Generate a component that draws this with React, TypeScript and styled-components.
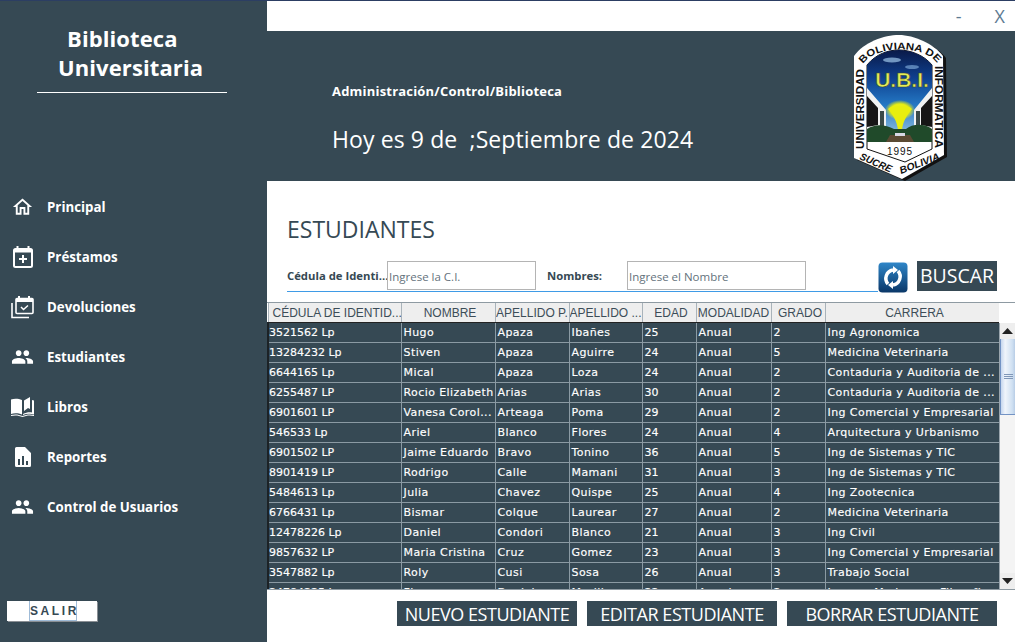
import React from "react";
import styled, { createGlobalStyle } from "styled-components";
import { MdOutlineHome, MdPeople } from "react-icons/md";

const Global = createGlobalStyle`
  html, body { margin: 0; padding: 0; background: #fff; }
  body { width: 1015px; height: 642px; overflow: hidden; font-family: "Open Sans", "Noto Sans", sans-serif; }
  * { box-sizing: border-box; }
`;

const DARK = "#364954";

const Page = styled.div`
  width: 1015px; height: 642px; display: grid; grid-template-columns: 267px 748px;
  border-top: 1px solid #2c3e63; overflow: hidden;
`;
const Sidebar = styled.aside`
  background: ${DARK}; color: #fff; display: flex; flex-direction: column; height: 641px;
`;
const Brand = styled.div`
  margin: 23px 40px 0 37px; width: 190px; height: 69px; border-bottom: 1px solid #fff;
  font-weight: 700; font-size: 22px; line-height: 29px; letter-spacing: .1px;
`;
const BrandLine = styled.div<{ $pad: number }>`
  padding-left: ${p => p.$pad}px; white-space: nowrap;
`;
const Nav = styled.nav`
  display: flex; flex-direction: column; margin-top: 89px;
`;
const NavItem = styled.div`
  height: 50px; display: flex; align-items: center; padding-left: 11px; gap: 13px;
  font-weight: 700; font-size: 13.3px; color: #fff;
`;
const IconBox = styled.span`
  width: 23px; height: 24px; display: flex; align-items: center; justify-content: center; flex: none;
`;
const Exit = styled.div`
  margin: 69px 0 0 7px; width: 90px; height: 20px; background: #fff; display: flex; justify-content: center;
  box-shadow: 1px 1px 0 #8a8f94;
`;
const ExitLabel = styled.span`
  width: 48px; height: 20px; margin-left: 2px; border: 1px solid #9fbbd8; border-top: 0;
  font: 700 12px "Liberation Sans", sans-serif; letter-spacing: 2.6px; color: #364954; line-height: 20px; text-align: center;
`;
const Main = styled.main`
  display: flex; flex-direction: column; height: 641px; background: #fff;
`;
const TitleBar = styled.div`
  height: 30px; display: flex; justify-content: flex-end; align-items: center; color: #5d7a92;
  font: 400 18px "Open Sans", sans-serif; padding-right: 10px; gap: 33px;
`;
const Banner = styled.header`
  height: 150px; background: ${DARK}; color: #fff; display: flex; justify-content: space-between;
  padding: 0 67px 0 65px; flex: none;
`;
const BannerText = styled.div`
  display: flex; flex-direction: column; padding-top: 51px;
`;
const PathLine = styled.div`font-weight: 700; font-size: 13px; line-height: 18px; letter-spacing: .2px;`;
const Today = styled.div`font-size: 23px; line-height: 30px; margin-top: 24px; letter-spacing: .1px;`;
const LogoBox = styled.div`margin-top: 2px; flex: none;`;
const Content = styled.section`
  flex: 1; display: flex; flex-direction: column; min-height: 0;
`;
const SectionTitle = styled.h1`
  margin: 34px 0 0 20px; font-size: 23px; font-weight: 400; color: #364954; line-height: 28px;
`;
const SearchBar = styled.div`
  display: flex; align-items: flex-start; margin: 18px 18px 0 20px; height: 33px; position: relative;
`;
const SearchLine = styled.div`
  position: absolute; left: 0; top: 30px; width: 591px; height: 1px; background: #3f9be6;
`;
const FieldLabel = styled.label<{ $w: number }>`
  font-weight: 700; font-size: 11.3px; color: #364954; line-height: 30px; width: ${p => p.$w}px; flex: none;
  white-space: nowrap; overflow: hidden;
`;
const Field = styled.div<{ $w: number; $mr: number }>`
  width: ${p => p.$w}px; height: 29px; border: 1px solid #b4b4b4; background: #fff; flex: none;
  font-size: 11.5px; color: #64727c; line-height: 29px; padding-left: 1px; margin-right: ${p => p.$mr}px;
`;
const RefreshBtn = styled.div`
  width: 30px; height: 32px; margin: 1px 9px 0 0; flex: none;
`;
const SearchBtn = styled.div`
  width: 80px; height: 30px; background: ${DARK}; color: #fff; font-size: 19.5px; line-height: 30px; text-align: center; flex: none;
`;
const TableWrap = styled.div`
  margin-top: 8px; height: 288px; display: grid; grid-template-columns: 732px 16px; border-top: 1px solid #8e9aa2; border-bottom: 1px solid #8e9aa2; overflow: hidden; flex: none;
`;
const TableClip = styled.div`height: 286px; overflow: hidden;`;
const Grid = styled.table`
  border-collapse: collapse; table-layout: fixed; width: 732px;
`;
const Th = styled.th<{ $w: number }>`
  width: ${p => p.$w}px; height: 19px; padding: 1px 0 0 ${p => (p.$w >= 70 && p.$w < 90 ? 0 : 4)}px; background: #eeeeee; border-right: 1px solid #a9b3ba;
  border-left: 1px solid #a9b3ba; border-bottom: 1px solid #222;
  font: 400 12px "Liberation Sans", sans-serif; color: #3c4d58; text-align: center; white-space: nowrap; overflow: hidden;
`;
const Td = styled.td<{ $wide: boolean }>`
  height: 20px; padding: 0 0 0 2px; background: ${DARK}; color: #fff; border: 1px solid #8b9aa3;
  font: 400 11px "DejaVu Sans", sans-serif; white-space: nowrap; overflow: hidden;
  letter-spacing: ${p => (p.$wide ? ".42px" : "0")};
  -webkit-text-stroke: .15px #fff;
  &:first-child { border-left: 2px solid #1c2226; padding-left: 0; }
  &:last-child { border-right: 1px solid #1c2226; }
`;
const ScrollBar = styled.div`
  background: #f4f4f4; display: flex; flex-direction: column; margin-top: 20px; border-left: 1px solid #9aa5ad; height: 266px;
`;
const ScrollBtn = styled.div`
  height: 16px; display: flex; align-items: center; justify-content: center; flex: none; background: #eee;
`;
const Thumb = styled.div`
  height: 76px; background: linear-gradient(90deg,#c5d6ee,#f0f5fb 30%,#cfe0f2 80%,#b8cde6); border-left: 1px solid #7393c4;
  border-bottom: 1px solid #7393c4; display: flex; flex-direction: column; gap: 1px; align-items: center; justify-content: center; flex: none;
`;
const Grip = styled.i`display: block; width: 9px; height: 1px; background: #7f97b8;`;
const Track = styled.div`flex: 1;`;
const Actions = styled.div`
  display: flex; padding: 11px 0 0 130px; gap: 10px; height: 52px;
`;
const ActionBtn = styled.div<{ $w: number }>`
  width: ${p => p.$w}px; height: 25px; background: ${DARK}; color: #fff; font-size: 18px; letter-spacing: -.45px; line-height: 26px; text-align: center; white-space: nowrap;
`;
const LogoText = styled.text`font-family: "Liberation Sans", sans-serif;`;

const CalPlus = () => (
  <svg width="20" height="22" viewBox="0 0 20 22" fill="none"><path d="M4.500 0v3M15.500 0v3" stroke="#fff" strokeWidth="2"/><rect x="1" y="3" width="18" height="18" rx="1.500" stroke="#fff" strokeWidth="2"/><path d="M1 5h18" stroke="#fff" strokeWidth="3"/><path d="M10 9v8M6 13h8" stroke="#fff" strokeWidth="2"/></svg>
);
const CalCheck = () => (
  <svg width="23" height="24" viewBox="0 0 23 24" fill="none"><path d="M8 1v3M18 1v3" stroke="#fff" strokeWidth="2"/><rect x="5" y="3.500" width="17" height="15" rx="1" stroke="#fff" strokeWidth="1.600"/><path d="M5 5.500h17" stroke="#fff" strokeWidth="3"/><path d="M10 12l2.500 2.500 4.500-4" stroke="#fff" strokeWidth="1.500"/><path d="M1 8v14.500h17" stroke="#fff" strokeWidth="1.600"/></svg>
);
const BookIcon = () => (
  <svg width="23" height="20" viewBox="0 0 23 20"><path fill="#fff" d="M0 2.500C3 1.500 7.500 1.500 11 3v14.500C7.500 16 3 16 0 17zM13 3.500L19 0v12l-2-1-4 3zM21 3l2 .5v14c-3.500-1-7.500-1-11 .5v-1c3-1.500 6-2 9-1.500z"/><path fill="#fff" d="M0 18c4-1 8-.5 11.500 1 3.500-1.500 7.500-2 11.500-1v1c-4-1-8-.5-11.500 1-3.500-1.500-7.500-2-11.500-1z"/></svg>
);
const ReportIcon = () => (
  <svg width="16" height="20" viewBox="0 0 16 20"><path fill="#fff" fillRule="evenodd" d="M1.500 0H10l6 6v12.500a1.500 1.500 0 0 1-1.500 1.500h-13A1.500 1.500 0 0 1 0 18.500v-17A1.500 1.500 0 0 1 1.500 0zM3 12v6h2v-6zm4-3v9h2V9zm4 5v4h2v-4z"/></svg>
);
const Refresh = () => (
  <svg width="30" height="32" viewBox="0 0 30 32">
    <defs><linearGradient id="rb" x1="0" y1="0" x2="0" y2="1"><stop offset="0" stopColor="#2f86c8"/><stop offset="1" stopColor="#0a3768"/></linearGradient></defs>
    <rect x=".5" y=".5" width="29" height="30" rx="4" fill="url(#rb)"/>
    <path d="M10 22A8.500 8.500 0 0 1 15 8" stroke="#fff" strokeWidth="3.500" fill="none"/>
    <path d="M15 4l5 4-5 4z" fill="#fff"/>
    <path d="M20 9A8.500 8.500 0 0 1 15 23" stroke="#fff" strokeWidth="3.500" fill="none"/>
    <path d="M15 27l-5-4 5-4z" fill="#fff"/>
  </svg>
);

const Shield = () => (
  <svg width="98" height="148" viewBox="0 0 98 148" style={{ display: "block" }}>
    <defs>
      <linearGradient id="sky" x1="0" y1="0" x2="0" y2="1">
        <stop offset="0" stopColor="#0a1a48"/><stop offset=".3" stopColor="#0e3f8e"/><stop offset=".6" stopColor="#2478c4"/><stop offset="1" stopColor="#a8cfe6"/>
      </linearGradient>
      <radialGradient id="burst"><stop offset="0" stopColor="#f6fa6a"/><stop offset=".6" stopColor="#e6ec10"/><stop offset="1" stopColor="#e6ec10" stopOpacity="0"/></radialGradient>
      <path id="arcL" d="M14.500 116V34"/>
      <path id="arcT" d="M13 31C24 13 72 11 86 29"/>
      <path id="arcR" d="M85 33V117"/>
      <path id="arcS" d="M9 126L43 141"/>
      <path id="arcV" d="M51 141L93 125"/>
    </defs>
    <path d="M7 25C17 11 37 4 52 4C67 4 87 13 96 25L97 124L55 148L7 127z" fill="#111"/>
    <path d="M4 23C14 9 34 2 49 2C64 2 84 11 93 23L94 122L52 146L4 125z" fill="#fff"/>
    <path d="M17 32C26 21 38 17 49 17C60 17 74 22 82 32V116L55 129L17 116z" fill="#fff" stroke="#111" strokeWidth="1"/>
    <path d="M17 32C26 21 38 17 49 17C60 17 74 22 82 32V109H17z" fill="url(#sky)"/>
    <ellipse cx="42" cy="27" rx="9" ry="2.500" fill="#9ec6ea" opacity=".7"/>
    <ellipse cx="62" cy="34" rx="7" ry="2" fill="#8ab8e4" opacity=".6"/>
    <path d="M17 55L36 77V96L17 100zM82 55L64 77V96L82 100z" fill="#f0f2f2"/>
    <path d="M17 63L28 75V92L17 94zM82 63L71 75V92L82 94z" fill="#161616"/>
    <path d="M30 78h4v16h-4zM66 78h4v16h-4z" fill="#3a4a48"/>
    <ellipse cx="50" cy="77" rx="15" ry="10" fill="url(#burst)"/>
    <path d="M38 76C43 71 57 71 62 76C57 82 53 88 52 97H48C47 88 43 82 38 76z" fill="#e8ee0e"/>
    <path d="M17 96C26 90 36 92 44 96H56C62 91 74 90 82 96V109H17z" fill="#204a2a"/>
    <path d="M40 102h20l4 7H36z" fill="#5a4a33"/>
    <path d="M45 100h10v3H45z" fill="#d8d8e4"/>
    <LogoText x="52" y="54" fontSize="21" fill="#e4ec58" stroke="#3d4a30" strokeWidth=".6" fontWeight="700" textAnchor="middle">U.B.I.</LogoText>
    <LogoText x="50" y="122" fontSize="10" fill="#111" textAnchor="middle" letterSpacing="1">1995</LogoText>
    <LogoText fontSize="10" fontWeight="700" fill="#111"><textPath href="#arcL" textLength="80" lengthAdjust="spacingAndGlyphs">UNIVERSIDAD</textPath></LogoText>
    <LogoText fontSize="10" fontWeight="700" fill="#111"><textPath href="#arcT" textLength="82" lengthAdjust="spacingAndGlyphs">BOLIVIANA DE</textPath></LogoText>
    <LogoText fontSize="10" fontWeight="700" fill="#111"><textPath href="#arcR" textLength="82" lengthAdjust="spacingAndGlyphs">INFORMATICA</textPath></LogoText>
    <LogoText fontSize="10" fontStyle="italic" fontWeight="700" fill="#111"><textPath href="#arcS" textLength="34" lengthAdjust="spacingAndGlyphs">SUCRE</textPath></LogoText>
    <LogoText fontSize="10" fontStyle="italic" fontWeight="700" fill="#111"><textPath href="#arcV" textLength="42" lengthAdjust="spacingAndGlyphs">BOLIVIA</textPath></LogoText>
  </svg>
);

const cols = [133, 94, 74, 73, 54, 75, 54, 175];
const heads = ["CÉDULA DE IDENTID...", "NOMBRE", "APELLIDO P.", "APELLIDO ...", "EDAD", "MODALIDAD", "GRADO", "CARRERA"];
const rows = [
  ["3521562 Lp","Hugo","Apaza","Ibañes","25","Anual","2","Ing Agronomica"],
  ["13284232 Lp","Stiven","Apaza","Aguirre","24","Anual","5","Medicina Veterinaria"],
  ["6644165 Lp","Mical","Apaza","Loza","24","Anual","2","Contaduria y Auditoria de ..."],
  ["6255487 LP","Rocio Elizabeth","Arias","Arias","30","Anual","2","Contaduria y Auditoria de ..."],
  ["6901601 LP","Vanesa Corol...","Arteaga","Poma","29","Anual","2","Ing Comercial y Empresarial"],
  ["546533 Lp","Ariel","Blanco","Flores","24","Anual","4","Arquitectura y Urbanismo"],
  ["6901502 LP","Jaime Eduardo","Bravo","Tonino","36","Anual","5","Ing de Sistemas y TIC"],
  ["8901419 LP","Rodrigo","Calle","Mamani","31","Anual","3","Ing de Sistemas y TIC"],
  ["5484613 Lp","Julia","Chavez","Quispe","25","Anual","4","Ing Zootecnica"],
  ["6766431 Lp","Bismar","Colque","Laurear","27","Anual","2","Medicina Veterinaria"],
  ["12478226 Lp","Daniel","Condori","Blanco","21","Anual","3","Ing Civil"],
  ["9857632 LP","Maria Cristina","Cruz","Gomez","23","Anual","3","Ing Comercial y Empresarial"],
  ["3547882 Lp","Roly","Cusi","Sosa","26","Anual","3","Trabajo Social"],
  ["24784225 Lp","Flora","Daniel","Murillo","22","Anual","2","Lengua Moderna y Filosofia"],
];
const numeric = [0, 4, 6];
const nav: [string, React.ReactNode][] = [
  ["Principal", <MdOutlineHome size={26} color="#fff" />],
  ["Préstamos", <CalPlus />],
  ["Devoluciones", <CalCheck />],
  ["Estudiantes", <MdPeople size={24} color="#fff" />],
  ["Libros", <BookIcon />],
  ["Reportes", <ReportIcon />],
  ["Control de Usuarios", <MdPeople size={24} color="#fff" />],
];

export default function App() {
  return (
    <>
      <Global />
      <Page>
        <Sidebar>
          <Brand>
            <BrandLine $pad={30}>Biblioteca</BrandLine>
            <BrandLine $pad={21}>Universitaria</BrandLine>
          </Brand>
          <Nav>
            {nav.map(([t, icon]) => (
              <NavItem key={t}><IconBox>{icon}</IconBox>{t}</NavItem>
            ))}
          </Nav>
          <Exit><ExitLabel>SALIR</ExitLabel></Exit>
        </Sidebar>
        <Main>
          <TitleBar><span>-</span><span>X</span></TitleBar>
          <Banner>
            <BannerText>
              <PathLine>Administración/Control/Biblioteca</PathLine>
              <Today>Hoy es 9 de &nbsp;;Septiembre de 2024</Today>
            </BannerText>
            <LogoBox><Shield /></LogoBox>
          </Banner>
          <Content>
            <SectionTitle>ESTUDIANTES</SectionTitle>
            <SearchBar>
              <SearchLine />
              <FieldLabel $w={100}>Cédula de Identi...</FieldLabel>
              <Field $w={149} $mr={11}>Ingrese la C.I.</Field>
              <FieldLabel $w={80}>Nombres:</FieldLabel>
              <Field $w={179} $mr={72}>Ingrese el Nombre</Field>
              <RefreshBtn><Refresh /></RefreshBtn>
              <SearchBtn>BUSCAR</SearchBtn>
            </SearchBar>
            <TableWrap>
              <TableClip>
                <Grid>
                  <thead><tr>{heads.map((h, i) => <Th key={h} $w={cols[i]}>{h}</Th>)}</tr></thead>
                  <tbody>{rows.map((r) => <tr key={r[0]}>{r.map((c, i) => <Td key={i} $wide={!numeric.includes(i)}>{c}</Td>)}</tr>)}</tbody>
                </Grid>
              </TableClip>
              <ScrollBar>
                <ScrollBtn><svg width="11" height="6" viewBox="0 0 11 6"><path d="M5.500 0L11 6H0z" fill="#222"/></svg></ScrollBtn>
                <Thumb><Grip /><Grip /><Grip /></Thumb>
                <Track />
                <ScrollBtn><svg width="11" height="6" viewBox="0 0 11 6"><path d="M5.500 6L11 0H0z" fill="#222"/></svg></ScrollBtn>
              </ScrollBar>
            </TableWrap>
            <Actions>
              <ActionBtn $w={180}>NUEVO ESTUDIANTE</ActionBtn>
              <ActionBtn $w={190}>EDITAR ESTUDIANTE</ActionBtn>
              <ActionBtn $w={210}>BORRAR ESTUDIANTE</ActionBtn>
            </Actions>
          </Content>
        </Main>
      </Page>
    </>
  );
}
